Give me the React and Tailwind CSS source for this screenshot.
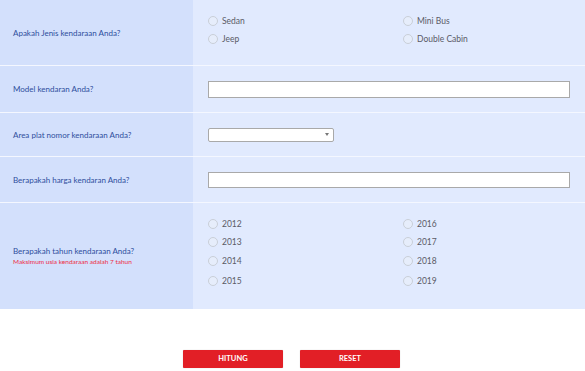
import React from 'react';

function Radio({ label, className = '' }) {
  return (
    <label className={`flex items-center gap-[4px] ${className}`}>
      <span className="w-[10px] h-[10px] rounded-full border border-[#c9cfd8] bg-[#e6edfb]" />
      <span className="text-[8.5px] text-[#5a5a66] leading-none">{label}</span>
    </label>
  );
}

function Row({ label, sub, height, children, last }) {
  return (
    <div className={`flex ${last ? '' : 'border-b border-[#f4f7ff]'}`} style={{ height }}>
      <div className="w-[193px] bg-[#d3e0fc] flex flex-col justify-center pl-[13px]">
        <div className="text-[8px] text-[#2f4f9c] leading-none">{label}</div>
        {sub && <div className="text-[6.5px] text-[#ee2a3f] leading-none mt-[4px]">{sub}</div>}
      </div>
      <div className="flex-1 bg-[#e1eafe] flex items-center pl-[15px]">{children}</div>
    </div>
  );
}

export default function App() {
  return (
    <div className="w-[585px] h-[371px] bg-white" style={{ fontFamily: 'Lato, "Open Sans", sans-serif' }}>
      <Row label="Apakah Jenis kendaraan Anda?" height={66}>
        <div className="grid grid-cols-[195px_1fr] w-full -mt-[5px]">
          <div className="flex flex-col gap-[8px]">
            <Radio label="Sedan" />
            <Radio label="Jeep" />
          </div>
          <div className="flex flex-col gap-[8px]">
            <Radio label="Mini Bus" />
            <Radio label="Double Cabin" />
          </div>
        </div>
      </Row>
      <Row label="Model kendaran Anda?" height={47}>
        <input className="w-[362px] h-[17px] bg-white border border-[#a9a9a9] outline-none" />
      </Row>
      <Row label="Area plat nomor kendaraan Anda?" height={44}>
        <div className="w-[126px] h-[14px] bg-white border border-[#a9a9a9] rounded-[2px] flex items-center justify-end pr-[4px]">
          <span className="w-0 h-0 border-l-[2px] border-r-[2px] border-t-[3px] border-l-transparent border-r-transparent border-t-[#777]" />
        </div>
      </Row>
      <Row label="Berapakah harga kendaran Anda?" height={46}>
        <input className="w-[362px] h-[16px] bg-white border border-[#a9a9a9] outline-none" />
      </Row>
      <Row
        label="Berapakah tahun kendaraan Anda?"
        sub="Maksimum usia kendaraan adalah 7 tahun"
        height={106}
        last
      >
        <div className="grid grid-cols-[195px_1fr] w-full -mt-[7px]">
          <div className="flex flex-col">
            <Radio label="2012" />
            <Radio label="2013" className="mt-[8px]" />
            <Radio label="2014" className="mt-[9px]" />
            <Radio label="2015" className="mt-[10px]" />
          </div>
          <div className="flex flex-col">
            <Radio label="2016" />
            <Radio label="2017" className="mt-[8px]" />
            <Radio label="2018" className="mt-[9px]" />
            <Radio label="2019" className="mt-[10px]" />
          </div>
        </div>
      </Row>
      <div className="flex justify-center gap-[17px] pt-[41px] pr-[2px]">
        <button className="w-[100px] h-[18px] bg-[#e21f26] text-white text-[7.5px] font-bold rounded-[1px] shadow-[0_0_1px_rgba(0,0,0,0.3)]">
          HITUNG
        </button>
        <button className="w-[100px] h-[18px] bg-[#e21f26] text-white text-[7.5px] font-bold rounded-[1px] shadow-[0_0_1px_rgba(0,0,0,0.3)]">
          RESET
        </button>
      </div>
    </div>
  );
}
